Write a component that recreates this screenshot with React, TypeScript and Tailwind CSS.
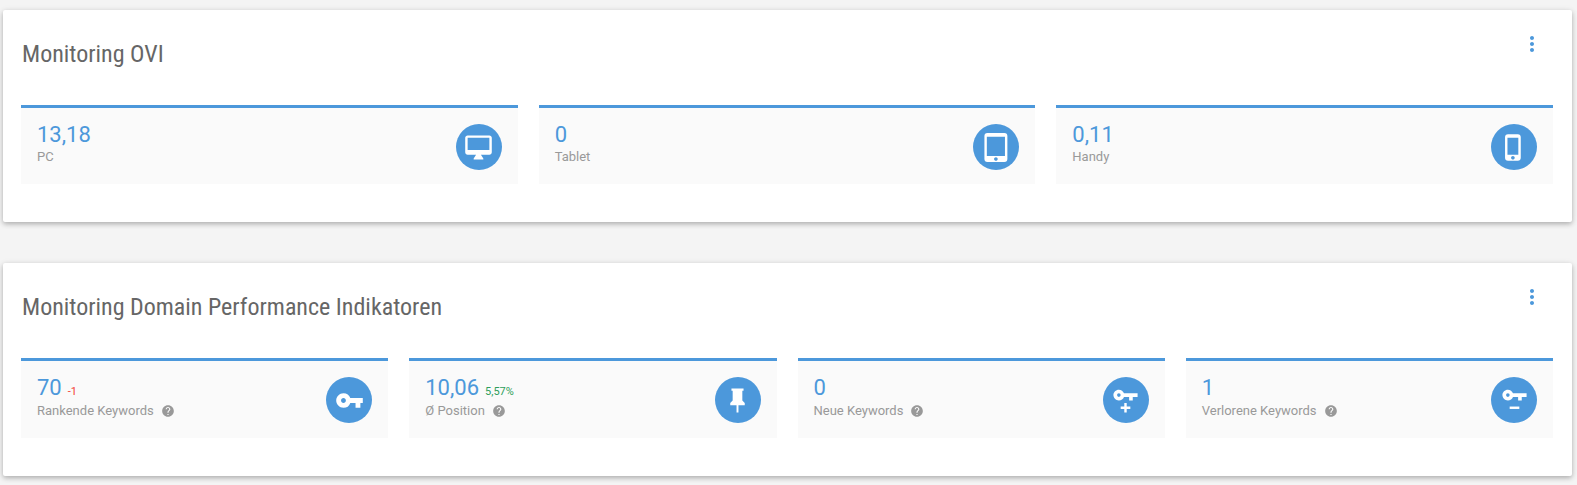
import { FC, ReactNode } from "react";
import clsx from "clsx";
import {
  MdHelp,
  MdMoreVert,
  MdPhoneIphone,
  MdTabletMac,
  MdVpnKey,
} from "react-icons/md";

const KEY_PATH =
  "M6.5 3c1.96 0 3.63 1.25 4.24 3H22v3h-4v3h-3V9h-4.26c-.61 1.75-2.28 3-4.24 3C4 12 2 10 2 7.5S4 3 6.5 3zm0 3a1.5 1.5 0 1 0 0 3 1.5 1.5 0 0 0 0-3z";

const DesktopIcon: FC = () => (
  <svg viewBox="0 0 24 24" fill="currentColor" aria-hidden="true">
    <path d="M21 14H3V4h18v10zm0-12H3c-1.1 0-2 .9-2 2v12c0 1.1.9 2 2 2h7l-2 3v1h8v-1l-2-3h7c1.1 0 2-.9 2-2V4c0-1.1-.9-2-2-2z" />
  </svg>
);

const PinIcon: FC = () => (
  <svg viewBox="0 0 24 24" fill="currentColor" aria-hidden="true">
    <path d="M16 12V4h1V2H7v2h1v8l-2 2v2h5.2v6h1.6v-6H18v-2l-2-2z" />
  </svg>
);

const KeyPlusIcon: FC = () => (
  <svg viewBox="0 0 24 24" fill="currentColor" aria-hidden="true">
    <path d={KEY_PATH} />
    <path d="M11 14h2v3h3v2h-3v3h-2v-3H8v-2h3z" />
  </svg>
);

const KeyMinusIcon: FC = () => (
  <svg viewBox="0 0 24 24" fill="currentColor" aria-hidden="true">
    <path d={KEY_PATH} />
    <path d="M8 17h8v2H8z" />
  </svg>
);

type TileProps = {
  value: string;
  label: string;
  icon: ReactNode;
  change?: ReactNode;
  help?: boolean;
};

const Tile: FC<TileProps> = ({ value, label, icon, change, help }) => (
  <div className="flex items-start justify-between border-t-3 border-[#4c98db] bg-[#fafafa] px-4 pt-4 pb-[14px]">
    <div>
      <p className="flex h-[22px] items-baseline gap-[6px] text-[22px] leading-[22px] text-[#4c98db]">
        {value}
        {change}
      </p>
      <p
        className={clsx(
          "flex items-center gap-[7px] text-[13px] text-[#999999]",
          help ? "pb-px leading-6" : "leading-[22px]"
        )}
      >
        {label}
        {help && (
          <button type="button" aria-label={`Hilfe: ${label}`}>
            <MdHelp className="size-[14px]" />
          </button>
        )}
      </p>
    </div>
    <div className="flex size-[46px] items-center justify-center rounded-full bg-[#4c98db] text-white [&>svg]:size-[29px]">
      {icon}
    </div>
  </div>
);

type CardProps = {
  title: string;
  children: ReactNode;
};

const Card: FC<CardProps> = ({ title, children }) => (
  <section className="rounded-[2px] bg-white pr-[19px] pb-[38px] pl-[18px] shadow-[0_2px_5px_0_rgba(0,0,0,0.26),0_1px_8px_0_rgba(0,0,0,0.06)]">
    <header className="flex h-[95px] items-start justify-between pt-[22px] pr-[9px] pl-px">
      <h2 className="pt-[6px] font-['Roboto_Condensed','Liberation_Sans_Narrow',Roboto,sans-serif] text-2xl leading-8 text-[#666666]">
        {title}
      </h2>
      <button type="button" aria-label="Menü" className="text-[#4c98db]">
        <MdMoreVert className="size-6" />
      </button>
    </header>
    {children}
  </section>
);

const App: FC = () => {
  return (
    <main className="flex min-h-screen flex-col gap-[41px] bg-[#f4f4f4] pt-[10px] pr-[5px] pb-[9px] pl-[3px] font-[Roboto,sans-serif]">
      <Card title="Monitoring OVI">
        <div className="grid grid-cols-3 gap-[21px]">
          <Tile value="13,18" label="PC" icon={<DesktopIcon />} />
          <Tile value="0" label="Tablet" icon={<MdTabletMac />} />
          <Tile value="0,11" label="Handy" icon={<MdPhoneIphone />} />
        </div>
      </Card>
      <Card title="Monitoring Domain Performance Indikatoren">
        <div className="grid grid-cols-4 gap-[21px]">
          <Tile
            value="70"
            label="Rankende Keywords"
            icon={<MdVpnKey />}
            change={<span className="text-[11px] text-[#f44336]">-1</span>}
            help
          />
          <Tile
            value="10,06"
            label="Ø Position"
            icon={<PinIcon />}
            change={<span className="text-[11px] text-[#2e9e5b]">5,57%</span>}
            help
          />
          <Tile value="0" label="Neue Keywords" icon={<KeyPlusIcon />} help />
          <Tile
            value="1"
            label="Verlorene Keywords"
            icon={<KeyMinusIcon />}
            help
          />
        </div>
      </Card>
    </main>
  );
};

export default App;
